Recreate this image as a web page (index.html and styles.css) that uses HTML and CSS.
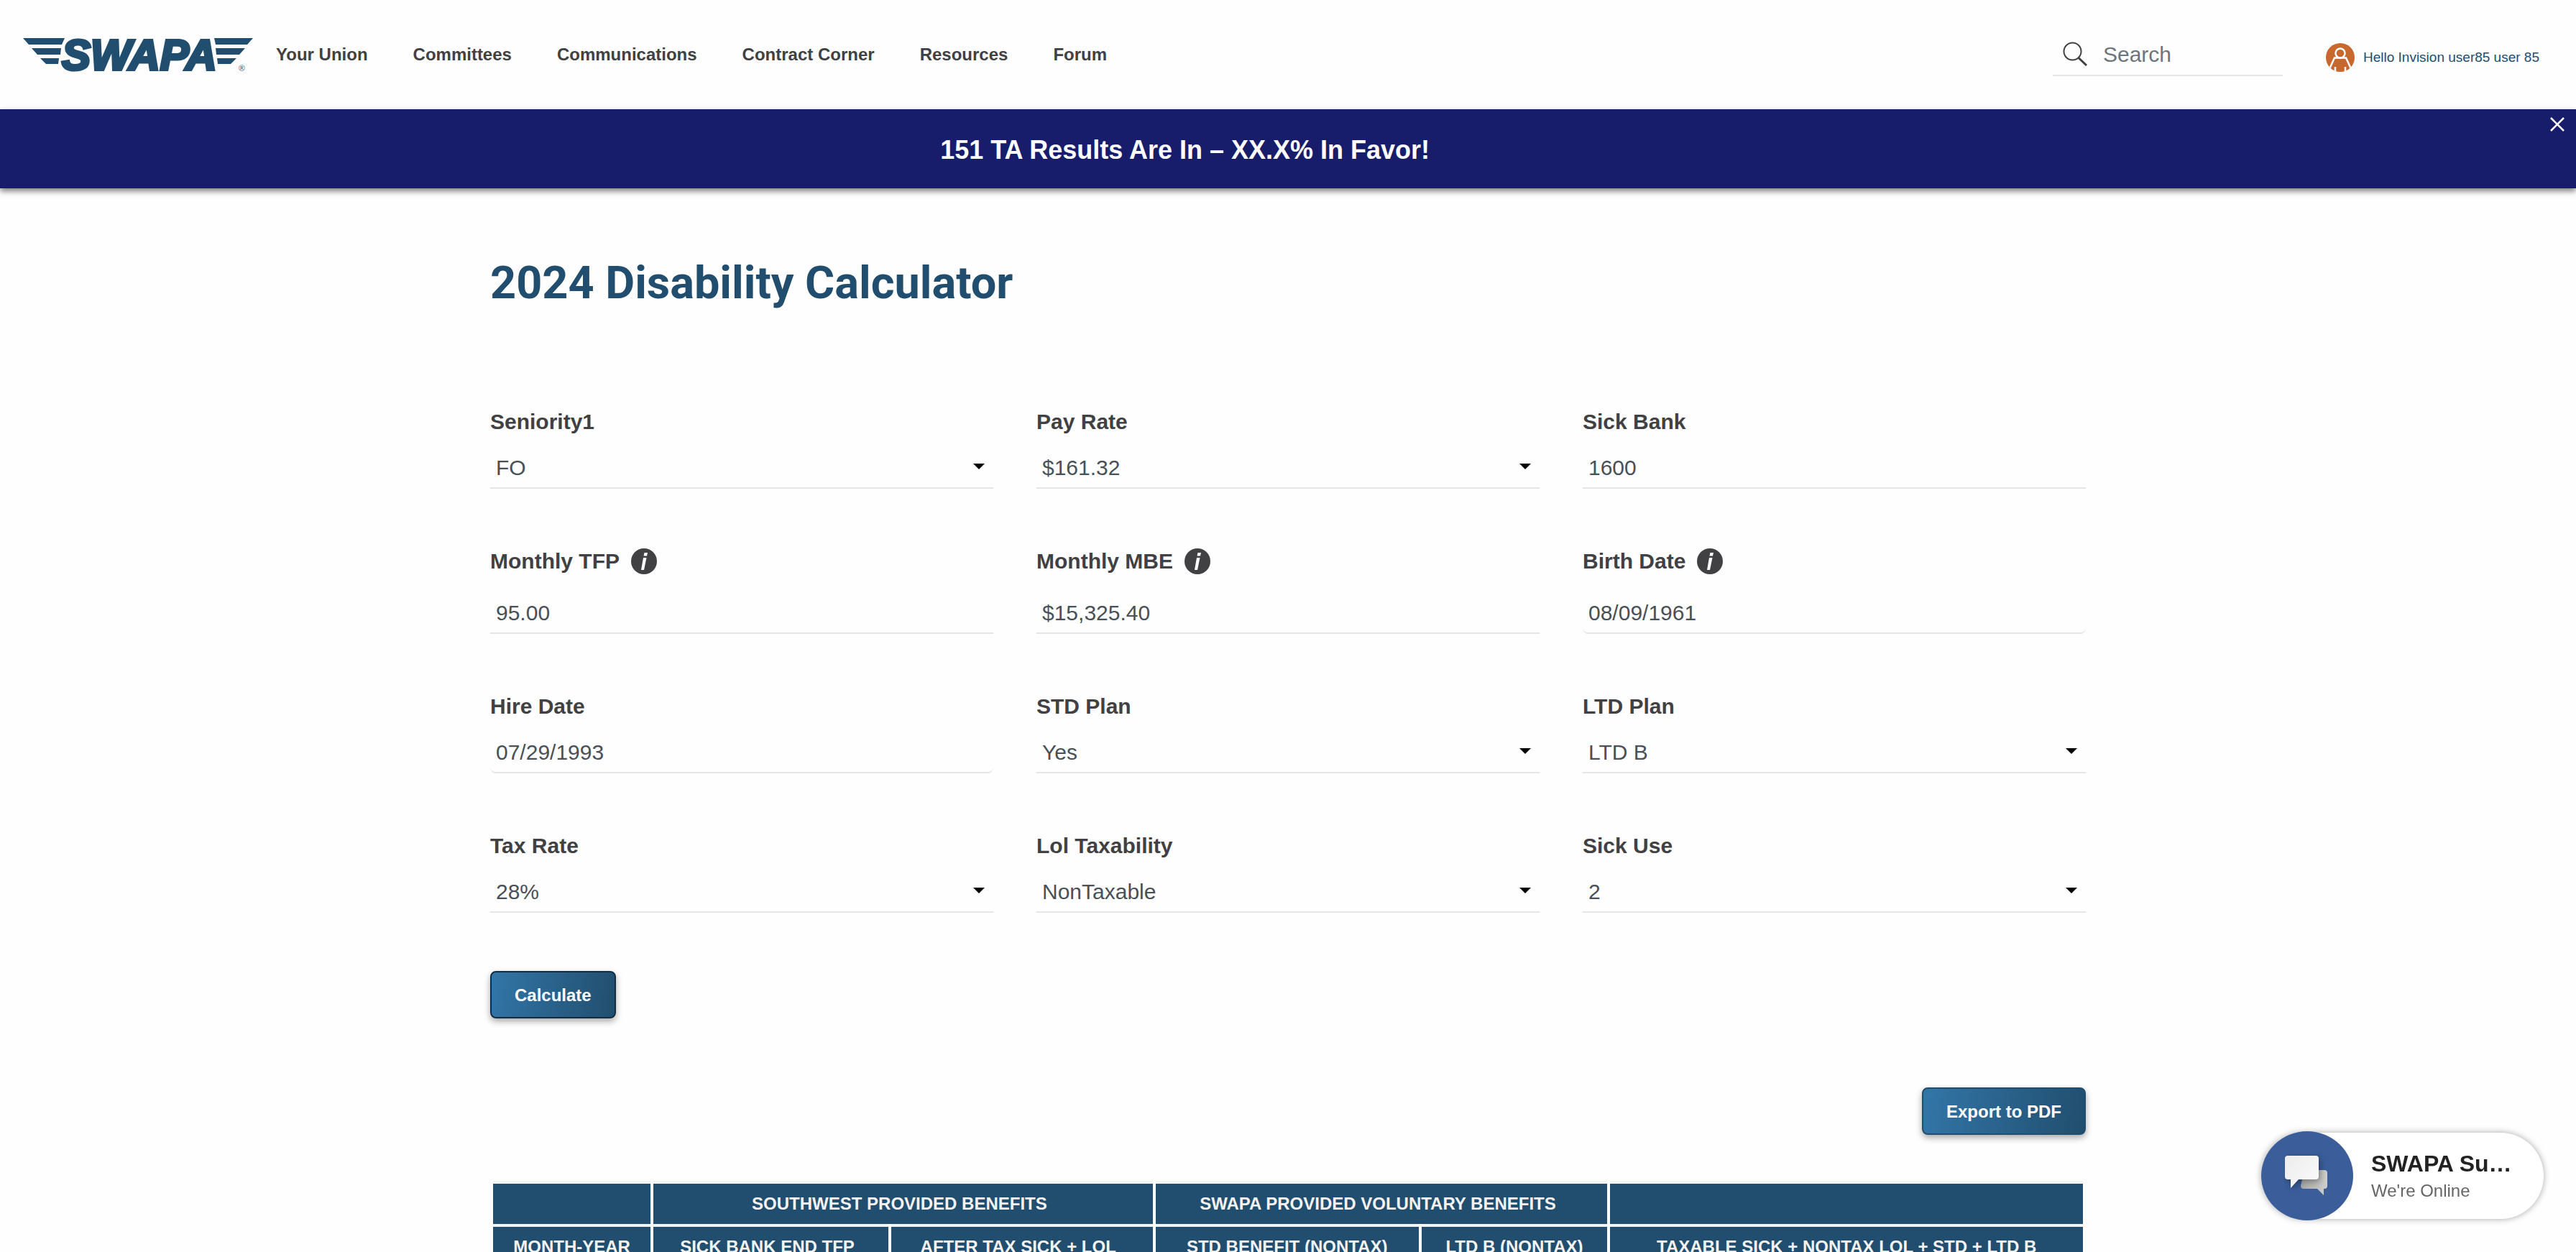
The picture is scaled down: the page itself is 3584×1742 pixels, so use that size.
FILE: index.html
```html
<!DOCTYPE html>
<html lang="en">
<head>
<meta charset="utf-8">
<meta name="viewport" content="width=device-width, initial-scale=1">
<title>2024 Disability Calculator</title>
<link rel="stylesheet" href="styles.css">
</head>
<body>
<header class="site-header">
  <a class="logo" href="#" aria-label="SWAPA home">
    <svg width="320" height="46" viewBox="0 0 320 46" fill="#214e6e">
      <path d="M0 0H58L54 9H8zM12 14H53L52 23H20zM24 28H50L49 36H32z"/>
      <path d="M266 0H320L312 9H268zM268 14H309L301 23H269zM270 28H297L289 36H271z"/>
      <text class="logo-word" x="54" y="44">SWAPA</text>
      <text class="logo-mark" x="300" y="46">®</text>
    </svg>
  </a>
  <nav class="main-nav">
    <a href="#">Your Union</a>
    <a href="#">Committees</a>
    <a href="#">Communications</a>
    <a href="#">Contract Corner</a>
    <a href="#">Resources</a>
    <a href="#">Forum</a>
  </nav>
  <form class="search" role="search">
    <label class="search-icon" for="search" aria-label="Search">
      <svg width="34" height="34" viewBox="0 0 34 34" fill="none" stroke="#414042" stroke-width="2"><circle cx="13.500" cy="13.500" r="12"/><path d="M22 22.500L33 33" stroke-width="3"/></svg>
    </label>
    <input class="search-input" id="search" type="text" placeholder="Search">
  </form>
  <a class="user" href="#">
    <svg width="40" height="40" viewBox="0 0 40 40"><defs><clipPath id="disc"><circle cx="20" cy="20" r="20"/></clipPath></defs><circle cx="20" cy="20" r="20" fill="#c8672e"/><g clip-path="url(#disc)" fill="none" stroke="#fff" stroke-width="2.500"><circle cx="20" cy="14" r="6.500"/><path d="M4 38L12 20.500H28L36 38M13 33V40M27 33V40"/></g></svg>
    <span>Hello Invision user85 user 85</span>
  </a>
</header>
<section class="banner">
  <p class="banner-text">151 TA Results Are In – XX.X% In Favor!</p>
  <button class="banner-close" type="button" aria-label="Close">
    <svg width="20" height="20" viewBox="0 0 20 20" stroke="#fff" stroke-width="2.500"><path d="M1 1L19 19M19 1L1 19"/></svg>
  </button>
</section>
<main class="main">
  <div class="container">
    <h1 class="title">2024 Disability Calculator</h1>
    <form class="calculator">
      <div class="fields">
        <div class="field"><label for="seniority">Seniority1</label><select id="seniority"><option>FO</option></select></div>
        <div class="field"><label for="pay">Pay Rate</label><select id="pay"><option>$161.32</option></select></div>
        <div class="field"><label for="bank">Sick Bank</label><input id="bank" type="text" value="1600"></div>
        <div class="field field-info"><label for="tfp">Monthly TFP <svg class="info" viewBox="0 0 36 36"><circle cx="18" cy="18" r="18" fill="#414042"/><path d="M18.500 6h4.500l-1 4.500h-4.500zM17 13h4.500l-3.500 17h-4z" fill="#fff"/></svg></label><input id="tfp" type="text" value="95.00"></div>
        <div class="field field-info"><label for="mbe">Monthly MBE <svg class="info" viewBox="0 0 36 36"><circle cx="18" cy="18" r="18" fill="#414042"/><path d="M18.500 6h4.500l-1 4.500h-4.500zM17 13h4.500l-3.500 17h-4z" fill="#fff"/></svg></label><input id="mbe" type="text" value="$15,325.40"></div>
        <div class="field field-info"><label for="birth">Birth Date <svg class="info" viewBox="0 0 36 36"><circle cx="18" cy="18" r="18" fill="#414042"/><path d="M18.500 6h4.500l-1 4.500h-4.500zM17 13h4.500l-3.500 17h-4z" fill="#fff"/></svg></label><input class="date" id="birth" type="text" value="08/09/1961"></div>
        <div class="field"><label for="hire">Hire Date</label><input class="date" id="hire" type="text" value="07/29/1993"></div>
        <div class="field"><label for="std">STD Plan</label><select id="std"><option>Yes</option></select></div>
        <div class="field"><label for="ltd">LTD Plan</label><select id="ltd"><option>LTD B</option></select></div>
        <div class="field"><label for="tax">Tax Rate</label><select id="tax"><option>28%</option></select></div>
        <div class="field"><label for="lol">Lol Taxability</label><select id="lol"><option>NonTaxable</option></select></div>
        <div class="field"><label for="use">Sick Use</label><select id="use"><option>2</option></select></div>
      </div>
      <button class="btn btn-dark" type="button">Calculate</button>
    </form>
    <div class="export">
      <button class="btn" type="button">Export to PDF</button>
    </div>
    <table class="results">
      <colgroup><col class="c-month"><col class="c-sick"><col class="c-after"><col class="c-std"><col class="c-ltd"><col class="c-total"></colgroup>
      <thead>
        <tr><th></th><th class="benefit" colspan="2">SOUTHWEST PROVIDED BENEFITS</th><th class="benefit" colspan="2">SWAPA PROVIDED VOLUNTARY BENEFITS</th><th></th></tr>
        <tr><th>MONTH-YEAR</th><th class="benefit">SICK BANK END TFP</th><th class="benefit">AFTER TAX SICK + LOL</th><th>STD BENEFIT (NONTAX)</th><th>LTD B (NONTAX)</th><th>TAXABLE SICK + NONTAX LOL + STD + LTD B</th></tr>
      </thead>
    </table>
  </div>
</main>
<button class="chat" type="button">
  <span class="chat-badge">
    <svg width="64" height="64" viewBox="0 0 64 64">
      <defs><linearGradient id="front" x1="0" x2="1" y2="1"><stop offset="0" stop-color="#ececec"/><stop offset="1" stop-color="#fbfbfb"/></linearGradient><linearGradient id="back" x1="0" x2="1"><stop offset="0" stop-color="#a9a9a9"/><stop offset="1" stop-color="#cfcfcf"/></linearGradient></defs>
      <path d="M28 24H56q4 0 4 4V46q0 4-4 4H55V59L46 50H27q-4 0-4-4z" fill="url(#back)"/>
      <path class="chat-front" d="M5 4H44q4 0 4 4V33q0 4-4 4H20L9 49V37H5q-4 0-4-4V8q0-4 4-4z" fill="url(#front)"/>
    </svg>
  </span>
  <span class="chat-text"><strong>SWAPA Su…</strong><span>We're Online</span></span>
</button>
</body>
</html>
```
FILE: styles.css
```css
* { box-sizing: border-box; }

body {
  margin: 0;
  height: 100vh;
  display: flex;
  flex-direction: column;
  overflow: hidden;
  background: #fefefe;
  color: #414042;
  font-family: "Liberation Sans", Arial, sans-serif;
}

a { color: inherit; text-decoration: none; }
button, input, select { font-family: inherit; }

/* Header */
.site-header {
  flex: none;
  display: flex;
  align-items: center;
  height: 152px;
  padding: 0 51px 0 32px;
}
.logo { flex: none; margin-right: 32px; line-height: 0; }
.logo svg { overflow: visible; }
.logo-word {
  font: italic bold 60px "Liberation Sans", Arial, sans-serif;
  stroke: #214e6e;
  stroke-width: 4px;
}
.logo-mark { font: bold 12px "Liberation Sans", Arial, sans-serif; opacity: .7; }
.main-nav { display: flex; gap: 63px; font-size: 24px; font-weight: bold; line-height: 30px; white-space: nowrap; }
.search { display: flex; align-items: flex-end; width: 320px; margin-left: auto; }
.search-icon { width: 62px; padding: 0 14px 12px; border-bottom: 2px solid #e5e5e5; line-height: 0; }
.search-input {
  flex: 1;
  min-width: 0;
  height: 60px;
  padding: 2px 8px 0;
  border: 0;
  border-bottom: 2px solid #e5e5e5;
  background: none;
  font-size: 30px;
}
.search-input::placeholder { color: #6c757d; opacity: 1; }
.user { display: flex; align-items: center; gap: 12px; margin-left: 60px; padding-top: 8px; color: #214e6e; font-size: 19px; white-space: nowrap; }

/* Announcement */
.banner {
  position: relative;
  z-index: 1;
  flex: none;
  display: flex;
  align-items: center;
  justify-content: center;
  height: 110px;
  padding: 3px 8% 0 0;
  background: #171c6b;
  box-shadow: 0 4px 8px rgba(0, 0, 0, .5);
}
.banner-text { margin: 0; color: #fff; font-size: 36px; font-weight: bold; }
.banner-close { position: absolute; top: 11px; right: 16px; padding: 0; border: 0; background: none; line-height: 0; cursor: pointer; }

/* Calculator */
.main { flex: 1; min-height: 0; overflow-y: auto; scrollbar-width: none; }
.container { width: 62%; max-width: 2220px; margin: 0 auto; }
.title {
  margin: 0;
  padding: 82px 0 125px;
  color: #214e6e;
  font-family: Roboto, "Liberation Sans", sans-serif;
  font-size: 63px;
  line-height: 100px;
}
.fields { display: grid; grid-template-columns: repeat(3, 1fr); gap: 83px 60px; margin-bottom: 81px; }
.field { display: flex; flex-direction: column; gap: 16px; }
.field-info { gap: 24px; }
.field label { display: flex; align-items: center; gap: 16px; font-size: 30px; font-weight: bold; line-height: 36px; }
.info { width: 36px; height: 36px; }
.field input, .field select {
  width: 100%;
  height: 59px;
  padding: 2px 8px 0;
  border: 0;
  border-bottom: 2px solid #e5e5e5;
  border-radius: 0;
  background: none;
  color: #495057;
  font-size: 30px;
}
.field select {
  appearance: none;
  background: url("data:image/svg+xml,%3Csvg xmlns='http://www.w3.org/2000/svg' width='16' height='8'%3E%3Cpath d='M0 0h16L8 8z'/%3E%3C/svg%3E") no-repeat right 12px top 24px;
}
.field .date { border-radius: 8px; }

.btn {
  height: 66px;
  padding: 1px 32px 0;
  border: 2px solid #214e6e;
  border-radius: 8px;
  background: linear-gradient(100deg, #3276a8, #214e6e);
  box-shadow: 0 4px 10px rgba(0, 0, 0, .35);
  color: #fff;
  font-size: 24px;
  font-weight: bold;
}
.btn-dark { border-color: #0f2e45; }
.export { display: flex; justify-content: flex-end; padding: 96px 0 64px; }

.results { width: 100%; table-layout: fixed; border-collapse: separate; border-spacing: 4px 0; }
.results th {
  height: 60px;
  padding: 0;
  border-top: 4px solid #f4f3f3;
  background: #214e6e;
  background-clip: padding-box;
  color: #f4f3f3;
  font-size: 24px;
  white-space: nowrap;
}
.results .benefit { padding-right: 10px; }
.c-month { width: 10%; }
.c-sick { width: 14.9%; }
.c-after { width: 16.6%; }
.c-std { width: 16.7%; }
.c-ltd { width: 11.8%; }
.c-total { width: 30%; }

/* Chat launcher */
.chat {
  position: fixed;
  z-index: 2;
  right: 45px;
  bottom: 46px;
  display: flex;
  align-items: center;
  gap: 25px;
  width: 393px;
  height: 120px;
  padding: 0;
  border: 0;
  border-radius: 60px;
  background: #fff;
  box-shadow: 0 0 10px rgba(0, 0, 0, .35);
  text-align: left;
}
.chat-badge { flex: none; display: grid; place-items: center; width: 128px; height: 124px; border-radius: 50%; background: #3b5e9b; }
.chat-front { filter: drop-shadow(2px 3px 5px rgba(0, 0, 0, .35)); }
.chat-text { display: flex; flex-direction: column; gap: 4px; color: #666; font-size: 24px; line-height: 30px; }
.chat-text strong { color: #222; font-size: 32px; line-height: 38px; }
```
